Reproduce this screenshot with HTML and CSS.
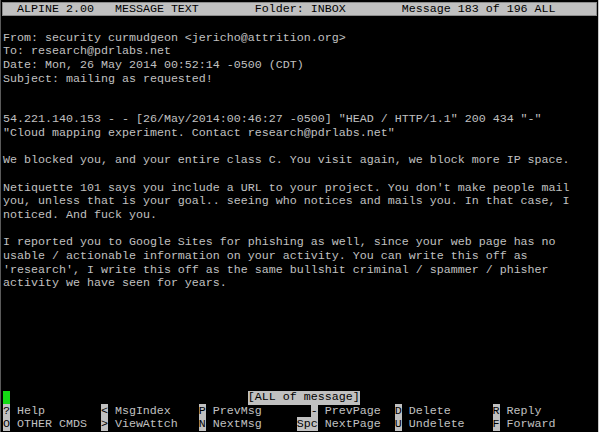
FILE: index.html
```html
<!DOCTYPE html>
<html>
<head>
<meta charset="utf-8">
<link rel="stylesheet" href="styles.css">
<title>Alpine</title>
</head>
<body>
<div class="term">
  <div class="row title">  ALPINE 2.00   MESSAGE TEXT        Folder: INBOX        Message 183 of 196 ALL </div>
  <div class="row"> </div>
  <div class="row">From: security curmudgeon &lt;jericho@attrition.org&gt;</div>
  <div class="row">To: research@pdrlabs.net</div>
  <div class="row">Date: Mon, 26 May 2014 00:52:14 -0500 (CDT)</div>
  <div class="row">Subject: mailing as requested!</div>
  <div class="row"> </div>
  <div class="row"> </div>
  <div class="row">54.221.140.153 - - [26/May/2014:00:46:27 -0500] "HEAD / HTTP/1.1" 200 434 "-"</div>
  <div class="row">"Cloud mapping experiment. Contact research@pdrlabs.net"</div>
  <div class="row"> </div>
  <div class="row">We blocked you, and your entire class C. You visit again, we block more IP space.</div>
  <div class="row"> </div>
  <div class="row">Netiquette 101 says you include a URL to your project. You don't make people mail</div>
  <div class="row">you, unless that is your goal.. seeing who notices and mails you. In that case, I</div>
  <div class="row">noticed. And fuck you.</div>
  <div class="row"> </div>
  <div class="row">I reported you to Google Sites for phishing as well, since your web page has no</div>
  <div class="row">usable / actionable information on your activity. You can write this off as</div>
  <div class="row">'research', I write this off as the same bullshit criminal / spammer / phisher</div>
  <div class="row">activity we have seen for years.</div>
  <div class="filler"></div>
  <div class="row low status"><span class="cursor"> </span><span class="rev msg">[ALL of message]</span></div>
  <div class="row low menu">
    <div class="item"><span class="key"><span class="rev">?</span></span><span class="label">Help</span></div>
    <div class="item"><span class="key"><span class="rev">&lt;</span></span><span class="label">MsgIndex</span></div>
    <div class="item"><span class="key"><span class="rev">P</span></span><span class="label">PrevMsg</span></div>
    <div class="item"><span class="key wide"><span class="rev">-</span></span><span class="label">PrevPage</span></div>
    <div class="item"><span class="key"><span class="rev">D</span></span><span class="label">Delete</span></div>
    <div class="item"><span class="key"><span class="rev">R</span></span><span class="label">Reply</span></div>
  </div>
  <div class="row low menu">
    <div class="item"><span class="key"><span class="rev">O</span></span><span class="label">OTHER CMDS</span></div>
    <div class="item"><span class="key"><span class="rev">&gt;</span></span><span class="label">ViewAttch</span></div>
    <div class="item"><span class="key"><span class="rev">N</span></span><span class="label">NextMsg</span></div>
    <div class="item"><span class="key wide"><span class="rev">Spc</span></span><span class="label">NextPage</span></div>
    <div class="item"><span class="key"><span class="rev">U</span></span><span class="label">Undelete</span></div>
    <div class="item"><span class="key"><span class="rev">F</span></span><span class="label">Forward</span></div>
  </div>
</div>
</body>
</html>
```

FILE: styles.css
```css
html, body {
  margin: 0;
  padding: 0;
  background: #000;
}
body {
  width: 599px;
  height: 432px;
  overflow: hidden;
}
.term {
  box-sizing: border-box;
  width: 599px;
  height: 432px;
  display: flex;
  flex-direction: column;
  padding: 2px 1px 1px 1px;
  border-left: 1px solid #5a5a5a;
  border-right: 1px solid #c8c8c8;
  font-family: "Liberation Mono", "Courier New", monospace;
  font-size: 11.66px;
  color: #c0c0c0;
}
.row {
  height: 13.65px;
  line-height: 13.65px;
  white-space: pre;
  padding-left: 1px;
  flex: none;
}
.row.low {
  height: 13.2px;
  line-height: 13.2px;
}
.title {
  height: 14px;
  line-height: 14px;
  margin-bottom: 2px;
  background: #c0c0c0;
  color: #000;
  box-shadow: inset 0 0 0 1px #8c8c8c;
}
.filler {
  flex: 1;
}
.status {
  display: flex;
}
.cursor {
  display: inline-block;
  width: 1ch;
  background: #14dc14;
}
.msg {
  margin-left: 34ch;
}
.rev {
  background: #c0c0c0;
  color: #000;
}
.menu {
  display: grid;
  grid-template-columns: repeat(6, 14ch);
}
.item {
  display: flex;
}
.key {
  display: inline-block;
  text-align: right;
  width: 1ch;
  margin-right: 1ch;
}
.key.wide {
  width: 3ch;
}
```
